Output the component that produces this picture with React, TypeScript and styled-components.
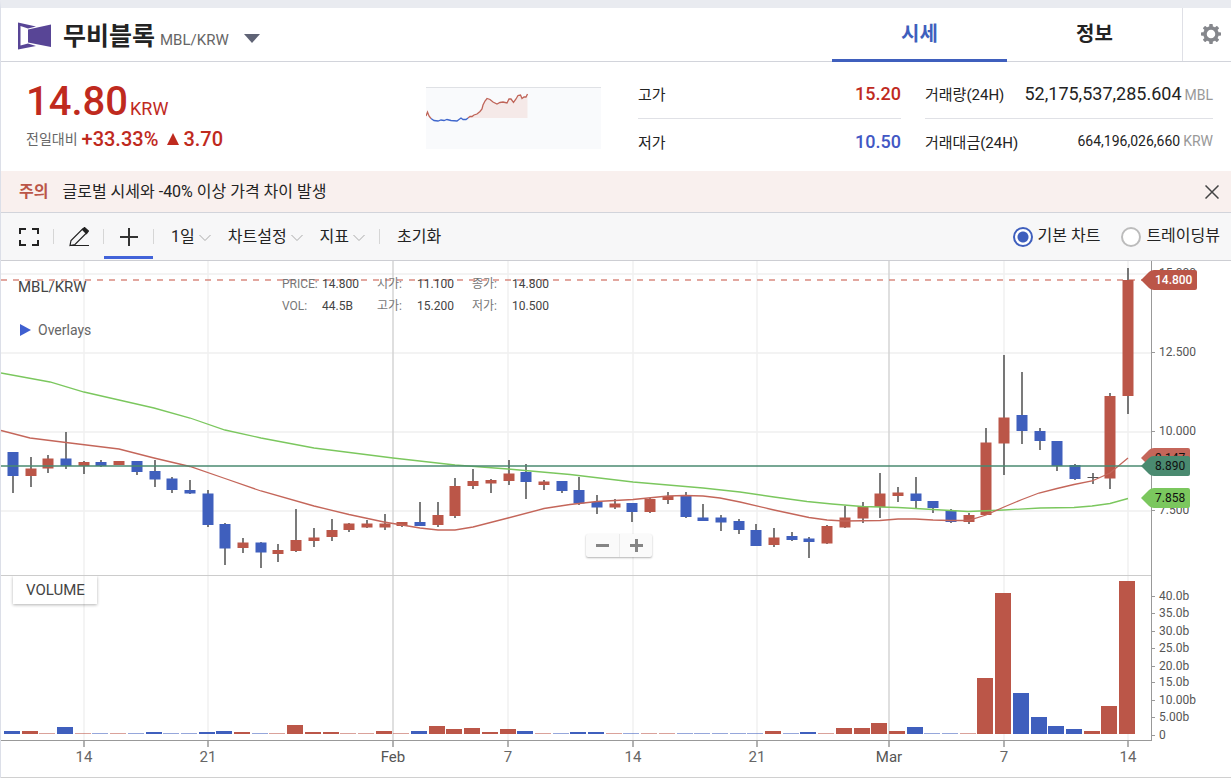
import React, { useLayoutEffect, useRef, useState } from 'react';
import styled, { createGlobalStyle, css } from 'styled-components';

const color = {
  red: '#bb5648',
  rise: '#bf2a1e',
  blue: '#3f5fbd',
  fall: '#4257c4',
  text: '#232323',
  line: '#d2d4db',
  green: '#4a8a70',
  lime: '#7bc75e',
};

const GlobalStyle = createGlobalStyle`
  * { box-sizing: border-box; }
  body {
    margin: 0;
    background: #fff;
    color: ${color.text};
    font-family: Roboto, "Noto Sans CJK KR", sans-serif;
    font-size: 15px;
  }
  button, input { font: inherit; color: inherit; }
  button { padding: 0; border: 0; background: none; cursor: pointer; }
  h1, p, dl, dd, dt { margin: 0; }
`;

const Page = styled.main`
  border-top: 8px solid #e9ebf0;
  border-left: 1px solid #dcdfe8;
`;

/* ---------- header ---------- */

const Header = styled.header`
  display: flex;
  height: 54px;
  border-bottom: 1px solid ${color.line};
`;

const CoinPicker = styled.button`
  display: flex;
  align-items: center;
  margin-right: auto;
  padding: 2px 0 0 16px;
`;

const CoinName = styled.h1`
  margin: 2px 0 0 12px;
  font-size: 25px;
  font-weight: 700;
  line-height: 32px;
`;

const CoinPair = styled.span`
  margin: 8px 15px 0 5px;
  font-size: 15px;
  line-height: 20px;
  color: #666;
`;

const DropArrow = styled.svg`
  width: 16px;
  height: 9px;
  margin-top: 6px;
`;

const Tabs = styled.nav`
  display: flex;
`;

const Tab = styled.a<{ $active?: boolean }>`
  width: 175px;
  height: 54px;
  font-size: 20px;
  font-weight: 700;
  line-height: 52px;
  text-align: center;
  text-decoration: none;
  color: ${(p) => (p.$active ? color.blue : color.text)};
  border-bottom: 3px solid ${(p) => (p.$active ? color.blue : 'transparent')};
`;

const SettingsButton = styled.button`
  display: flex;
  align-items: center;
  justify-content: center;
  width: 49px;
  padding: 0 0 2px 8px;
  border-left: 1px solid #dfe0e6;
`;

/* ---------- summary ---------- */

const Summary = styled.section`
  display: flex;
  height: 109px;
  padding: 0 18px 0 25px;
`;

const PriceBlock = styled.div`
  flex: 1;
  padding-top: 18px;
  color: ${color.rise};
  white-space: nowrap;
`;

const Price = styled.p`
  height: 47px;
  font-size: 18px;
  line-height: 44px;
`;

const PriceValue = styled.strong`
  margin-right: 2px;
  font-size: 40px;
  font-weight: 500;
`;

const Change = styled.p`
  display: flex;
  align-items: center;
  font-size: 20px;
  font-weight: 500;
  line-height: 24px;

  svg { margin: 0 4px 0 9px; }
`;

const ChangeLabel = styled.span`
  margin-right: 4px;
  font-size: 14px;
  font-weight: 400;
  line-height: 20px;
  color: #666;
`;

const Sparkline = styled.svg`
  width: 175px;
  height: 62px;
  margin-top: 25px;
  background: #f9fafc;
  border-top: 1px solid #dfe1e5;
`;

const Stats = styled.dl<{ $wide?: boolean }>`
  width: ${(p) => (p.$wide ? 288 : 263)}px;
  margin-left: ${(p) => (p.$wide ? 24 : 37)}px;
  padding-top: 9px;
`;

const StatRow = styled.div`
  display: flex;
  justify-content: space-between;
  align-items: center;
  height: 44px;
  white-space: nowrap;

  &:first-child {
    height: 48px;
    padding-bottom: 2px;
    border-bottom: 1px solid #e0e1e6;
  }
`;

const StatValue = styled.dd<{ $tone?: 'rise' | 'fall'; $small?: boolean }>`
  display: flex;
  align-items: baseline;
  gap: 3px;
  font-size: ${(p) => (p.$small ? 14 : 18)}px;
  font-weight: ${(p) => (p.$tone ? 500 : 400)};
  color: ${(p) => (p.$tone ? color[p.$tone] : color.text)};
`;

const Unit = styled.span`
  font-size: 14px;
  color: #999;
`;

/* ---------- notice ---------- */

const Notice = styled.section`
  display: flex;
  align-items: center;
  height: 42px;
  padding: 0 12px 0 18px;
  background: #f9f0ee;
  border-bottom: 1px solid ${color.line};
`;

const NoticeTitle = styled.strong`
  margin-right: 14px;
  font-size: 16px;
  line-height: 24px;
  color: ${color.red};
`;

const NoticeText = styled.p`
  flex: 1;
  font-size: 16px;
  line-height: 24px;
`;

const CloseButton = styled.button`
  display: flex;
`;

/* ---------- toolbar ---------- */

const Toolbar = styled.div`
  display: flex;
  align-items: center;
  height: 48px;
  padding: 0 11px 0 3px;
  background: #f7f7f8;
  border-bottom: 1px solid #cdced3;
  white-space: nowrap;
`;

const Divider = styled.span`
  width: 1px;
  height: 15px;
  background: #d6d6d6;
`;

const ToolButton = styled.button<{ $active?: boolean }>`
  display: flex;
  align-items: center;
  justify-content: center;
  width: 49px;
  height: 45px;
  border-top: 3px solid transparent;
  border-bottom: 3px solid ${(p) => (p.$active ? '#4263d9' : 'transparent')};
`;

const MenuButton = styled.button`
  display: flex;
  align-items: center;
  height: 45px;
  padding-bottom: 3px;
  margin-left: 17px;
  font-size: 16px;

  svg { margin: 6px 0 0 4px; }
  & + ${Divider} { margin-left: 14px; }
  ${Divider} + & { margin-left: 17px; }
`;

const ChartModes = styled.div`
  display: flex;
  gap: 21px;
  margin-left: auto;
`;

const ModeLabel = styled.label`
  display: flex;
  align-items: center;
  gap: 5px;
  font-size: 16px;
  line-height: 24px;
`;

const ModeText = styled.span`
  padding-bottom: 2px;
`;

const Radio = styled.input`
  appearance: none;
  width: 20px;
  height: 20px;
  margin: 0;
  border: 2px solid #bcbcbc;
  border-radius: 50%;
  background: #fff;

  &:checked {
    border-color: ${color.blue};
    background: radial-gradient(circle, ${color.blue} 5px, #fff 6px);
  }
`;

/* ---------- chart ---------- */

const ChartFrame = styled.section`
  position: relative;
  height: 517px;
  border-bottom: 1px solid #d0d0d0;
`;

const ChartSvg = styled.svg`
  display: block;
  width: 100%;
  height: 516px;
`;

const overlay = css`
  position: absolute;
  white-space: nowrap;
`;

const ChartTitle = styled.p`
  ${overlay}
  top: 16px;
  left: 17px;
  line-height: 20px;
  color: #444;
`;

const OverlaysButton = styled.button`
  ${overlay}
  top: 60px;
  left: 19px;
  display: flex;
  align-items: center;
  gap: 7px;
  font-size: 14px;
  line-height: 18px;
  color: #666;
`;

const Quote = styled.dl`
  ${overlay}
  top: 12px;
  left: 281px;
  display: grid;
  grid-template-columns: 40px 55px 40px 55px 40px 55px;
  font-size: 12px;
  line-height: 22px;
  color: #444;

  dt { color: #777; }
`;

const VolumeBadge = styled.p`
  ${overlay}
  top: 315px;
  left: 12px;
  padding: 4px 12px 4px 13px;
  line-height: 20px;
  color: #444;
  box-shadow: 0 1px 3px rgba(0, 0, 0, 0.3);
  clip-path: inset(0 -4px -4px -4px);
`;

const ZoomControls = styled.div`
  ${overlay}
  top: 273px;
  left: 50%;
  display: flex;
  margin-left: -30px;
  border-radius: 2px;
  background: #fafafa;
  box-shadow: 0 1px 2px rgba(0, 0, 0, 0.3);
`;

const ZoomButton = styled.button`
  display: flex;
  align-items: center;
  justify-content: center;
  width: 33px;
  height: 23px;

  & + & { border-left: 1px solid #eaeaea; }
`;

type Tone = 'r' | 'b' | 'n';
// [tone, high, body top, body bottom, low, volume height]
type Candle = [Tone, number, number, number, number, number];

const candles: Candle[] = [
  ['b', 452, 452, 476, 493, 3], ['r', 457, 468.5, 476, 487, 3], ['r', 455, 458.5, 468.5, 473, 1],
  ['b', 432, 458.5, 466, 469, 7], ['r', 461, 462, 466, 474, 1], ['b', 460, 462, 466, 467, 1],
  ['r', 461, 461, 465, 465, 1], ['b', 461, 461, 472, 475, 1], ['b', 460, 471, 479.5, 487, 2],
  ['b', 477, 478.5, 490, 493, 1], ['b', 480, 490, 493.5, 494, 1], ['b', 490, 493.5, 525, 527, 2],
  ['b', 523, 524, 548.5, 565, 3], ['r', 538, 542.5, 548, 553, 2], ['b', 542, 542.5, 552.5, 568, 1],
  ['r', 544, 550, 554, 562, 1], ['r', 509, 540, 551, 552, 9], ['r', 528, 537.5, 541, 547, 2],
  ['r', 519, 530, 537, 541, 2], ['r', 523, 523.5, 530, 532, 1], ['r', 520, 523.5, 527.5, 528, 1],
  ['r', 514, 523.5, 527.5, 530, 3], ['r', 522, 522, 526, 527, 1], ['b', 502, 522, 526, 526, 3],
  ['r', 502, 515, 525, 527, 8], ['r', 478, 486, 516, 518, 5], ['r', 469, 481, 486, 489, 6],
  ['r', 479, 480, 483.5, 493, 2], ['r', 460, 473.5, 481, 485, 5], ['b', 464, 472, 482, 499, 3],
  ['r', 480, 481.5, 485, 490, 1], ['b', 481, 481, 491, 493, 1], ['b', 477, 490, 503.5, 505, 2],
  ['b', 495, 502, 507.5, 514, 2], ['r', 499, 503.5, 507.5, 509, 1], ['b', 503, 503, 512, 522, 1],
  ['r', 498, 499, 512, 513, 1], ['r', 492, 496, 500, 504, 1], ['b', 492, 496, 517, 518, 1],
  ['b', 504, 517.5, 521, 521, 1], ['b', 515, 517.5, 522.5, 531, 1], ['b', 519, 521, 530, 534, 1],
  ['b', 524, 530, 546, 546, 1], ['r', 528, 537.5, 545, 547, 3], ['b', 532, 536, 540, 541, 1],
  ['b', 537, 538.5, 542, 558, 2], ['r', 525, 526, 543.5, 544, 1], ['r', 506, 517.5, 527.5, 528, 6],
  ['r', 502, 506.5, 518.5, 523, 6], ['r', 473, 493.5, 507, 518, 11], ['r', 487, 492.5, 496, 502, 3],
  ['b', 477, 493.5, 501, 508, 7], ['b', 501, 501, 508, 513, 1], ['b', 509, 510.5, 522, 523, 1],
  ['r', 513, 515, 522, 524, 1], ['r', 428, 442.5, 515, 515, 56], ['r', 355, 417.5, 443.5, 475, 141],
  ['b', 372, 415, 431, 444, 41], ['b', 428, 431, 441, 450, 17], ['b', 441, 441, 466, 471, 8],
  ['b', 464, 465, 479, 480, 5], ['n', 473, 477, 478, 484, 3], ['r', 393, 396, 478.5, 489, 28],
  ['r', 268, 280, 396, 414, 153],
];

const longAverage: [number, number][] = [
  [1, 373], [50, 382], [84, 392], [119, 400], [154, 408], [190, 418], [225, 430], [261, 438],
  [314, 448], [393, 458], [455, 465], [508, 469], [570, 474.5], [633, 482], [703, 488], [740, 492],
  [774, 497], [807, 501.5], [832, 504], [862, 506.5], [898, 507.5], [933, 509.5], [968, 511.5],
  [1004, 510], [1040, 508], [1074, 507.5], [1092, 506], [1110, 503.5], [1128, 498.5],
];

const shortAverage: [number, number][] = [
  [1, 430.5], [30, 438], [66, 442.5], [119, 449], [154, 458], [190, 466.5], [225, 478.5],
  [261, 491], [314, 506], [349, 514.5], [384, 522], [420, 528], [438, 530], [455, 530], [473, 527],
  [508, 518], [544, 508.5], [570, 504.5], [597, 501.5], [633, 499.5], [668, 496], [685, 495.5],
  [703, 496], [720, 498], [740, 502], [774, 510], [809, 517.5], [827, 520], [844, 521], [880, 520.5],
  [898, 519], [915, 519], [933, 520], [950, 520.5], [968, 520.5], [986, 515], [1004, 507],
  [1022, 499.5], [1039, 493], [1057, 488.5], [1074, 484.5], [1092, 481], [1110, 473], [1128, 458],
];

const dates: [number, string, boolean?][] = [
  [84, '14'], [208, '21'], [393, 'Feb', true], [508, '7'], [633, '14'], [757, '21'],
  [889, 'Mar', true], [1004, '7'], [1128, '14'],
];
const priceTicks: [number, string][] = [
  [273, '15.000'], [352, '12.500'], [431, '10.000'], [510, '7.500'],
];
const volumeTicks: [number, string][] = [
  [596, '40.0b'], [613, '35.0b'], [631, '30.0b'], [648, '25.0b'], [666, '20.0b'], [682, '15.0b'],
  [700, '10.00b'], [717, '5.00b'], [735, '0'],
];

const fillOf = (t: Tone) => (t === 'b' ? color.blue : t === 'r' ? color.red : '#555');

function PriceTag({ y, edge, width, fill, label, light }: {
  y: number; edge: number; width: number; fill: string; label: string; light?: boolean;
}) {
  const left = edge - 10;
  const right = edge + width;
  return (
    <g>
      <path
        d={`M${left} ${y} l8 -8 q2 -2 5 -2 H${right - 2} q2 0 2 2 v16 q0 2 -2 2 H${left + 13} q-3 0 -5 -2 z`}
        fill={fill}
      />
      <text x={edge + 4} y={y + 4} fontSize={12} fontWeight={light ? 500 : 400} fill={light ? '#fff' : '#111'}>
        {label}
      </text>
    </g>
  );
}

function Chart() {
  const frame = useRef<HTMLElement>(null);
  const [width, setWidth] = useState(1230);

  useLayoutEffect(() => {
    const el = frame.current;
    if (!el) return undefined;
    const update = () => setWidth(el.clientWidth);
    update();
    const observer = new ResizeObserver(update);
    observer.observe(el);
    return () => observer.disconnect();
  }, []);

  const axis = width - 79;
  const last = axis - 23;
  const scale = (last - 13) / 1115;
  const fx = (x: number) => 13 + (x - 13) * scale;
  const at = (i: number) => Math.round(13 + (i * (last - 13)) / (candles.length - 1));
  const line = (pts: [number, number][]) => pts.map(([x, y]) => `${fx(x).toFixed(1)},${y}`).join(' ');

  return (
    <ChartFrame ref={frame}>
      <ChartSvg role="img" aria-label="MBL/KRW">
        <g transform="translate(-1 -261)">
          {priceTicks.map(([y]) => (
            <path key={y} d={`M1 ${y + 1}H${axis}`} stroke="#efefef" strokeWidth={1.5} />
          ))}
          {dates.map(([x, , month]) => (
            <path
              key={x}
              d={`M${Math.round(fx(x))} 261V740`}
              stroke={month ? '#d4d4d4' : '#f0f0f0'}
              strokeWidth={1.5}
            />
          ))}
          <path d={`M1 280H${axis - 8}`} stroke="#d98a80" strokeWidth={1.5} strokeDasharray="6 6" />
          {candles.map(([tone, high, top, bottom, low, volume], i) => (
            <g key={i}>
              <path d={`M${at(i)} ${high}V${low}`} stroke="#333" strokeWidth={1.3} />
              <rect x={at(i) - 5.5} y={top} width={11} height={bottom - top} fill={fillOf(tone)} />
              <rect
                x={at(i) - 9}
                y={734 - volume}
                width={16}
                height={volume}
                fill={tone === 'b' ? color.blue : color.red}
                opacity={volume === 1 ? 0.55 : 1}
              />
            </g>
          ))}
          <polyline points={line(longAverage)} fill="none" stroke={color.lime} strokeWidth={1.3} />
          <polyline points={line(shortAverage)} fill="none" stroke="#c4665a" strokeWidth={1.3} />
          <path d={`M1 466H${axis}`} stroke={color.green} strokeWidth={1.5} />

          <path d={`M1 575.5H${axis}`} stroke="#ccc" />
          <path d={`M1 740.5H${axis + 1}`} stroke="#999" />
          <path d={`M${axis + 0.5} 261V741`} stroke="#999" />
          {dates.map(([x, label, month]) => (
            <g key={x}>
              <path d={`M${Math.round(fx(x))} 741v6`} stroke="#999" strokeWidth={1.5} />
              <text x={fx(x)} y={762} fontSize={15} textAnchor="middle" fill={month ? '#555' : '#666'}>
                {label}
              </text>
            </g>
          ))}
          {[...priceTicks, ...volumeTicks].map(([y, label]) => (
            <g key={label}>
              <path d={`M${axis} ${y + 0.5}h4`} stroke="#999" />
              <text x={axis + 8} y={y + 4} fontSize={12} fill="#555">
                {label}
              </text>
            </g>
          ))}
          <PriceTag y={280} edge={axis} width={46} fill={color.red} label="14.800" light />
          <PriceTag y={458} edge={axis} width={39} fill="#c4665a" label="9.147" />
          <PriceTag y={466} edge={axis} width={39} fill={color.green} label="8.890" />
          <PriceTag y={498} edge={axis} width={39} fill={color.lime} label="7.858" />
        </g>
      </ChartSvg>

      <ChartTitle>MBL/KRW</ChartTitle>
      <OverlaysButton>
        <svg width="11" height="12" aria-hidden="true">
          <path d="M0 0l11 6L0 12z" fill="#3f5fd0" />
        </svg>
        Overlays
      </OverlaysButton>
      <Quote>
        <dt>PRICE:</dt><dd>14.800</dd>
        <dt>시가:</dt><dd>11.100</dd>
        <dt>종가:</dt><dd>14.800</dd>
        <dt>VOL:</dt><dd>44.5B</dd>
        <dt>고가:</dt><dd>15.200</dd>
        <dt>저가:</dt><dd>10.500</dd>
      </Quote>
      <VolumeBadge>VOLUME</VolumeBadge>
      <ZoomControls>
        <ZoomButton aria-label="축소">
          <svg width="13" height="13"><path d="M0 6.5h13" stroke="#858585" strokeWidth="3" /></svg>
        </ZoomButton>
        <ZoomButton aria-label="확대">
          <svg width="13" height="13"><path d="M0 6.5h13M6.5 0v13" stroke="#858585" strokeWidth="3" /></svg>
        </ZoomButton>
      </ZoomControls>
    </ChartFrame>
  );
}

const Chevron = () => (
  <svg width="12" height="8" fill="none" stroke="#aaa" aria-hidden="true">
    <path d="M0.5 1l5.5 5.5L11.5 1" />
  </svg>
);

const gearTeeth = [0, 45, 90, 135, 180, 225, 270, 315];

export default function App() {
  const [mode, setMode] = useState('basic');

  return (
    <>
      <GlobalStyle />
      <Page>
        <Header>
          <CoinPicker>
            <svg width="34" height="28" viewBox="0 0 34 28" aria-hidden="true">
              <path d="M1 0.500L19 4.500 11 6.500 3.500 4V23.500L11 21.500 19 24 1 27.500Z" fill="#584596" />
              <path d="M11 7.500L34 2.500V25L11 20.500Z" fill="#584596" />
            </svg>
            <CoinName>무비블록</CoinName>
            <CoinPair>MBL/KRW</CoinPair>
            <DropArrow aria-hidden="true">
              <path d="M0 0h16l-8 9z" fill="#5f6375" />
            </DropArrow>
          </CoinPicker>
          <Tabs>
            <Tab href="#trade" $active>시세</Tab>
            <Tab href="#info">정보</Tab>
          </Tabs>
          <SettingsButton aria-label="설정">
            <svg width="20" height="20" viewBox="-10 -10 20 20">
              <circle r="6" fill="none" stroke="#85878c" strokeWidth="3.500" />
              {gearTeeth.map((a) => (
                <rect key={a} x="-1.800" y="-10" width="3.600" height="3.500" rx="0.800" fill="#85878c" transform={`rotate(${a})`} />
              ))}
            </svg>
          </SettingsButton>
        </Header>

        <Summary>
          <PriceBlock>
            <Price><PriceValue>14.80</PriceValue>KRW</Price>
            <Change>
              <ChangeLabel>전일대비</ChangeLabel>
              +33.33%
              <svg width="12" height="12" aria-hidden="true"><path d="M6 0l6 12H0z" fill="#bf2a1e" /></svg>
              3.70
            </Change>
          </PriceBlock>
          <Sparkline viewBox="0 0 175 61" aria-hidden="true">
            <path
              d="M42 30L48 27 53 24 56 21 58 15 61 11 65 12 68 15 71 16 76 15 81 15 83 11 86 13 88 14 92 9 94 7 96 11 99 9 101.500 6V30Z"
              fill="#f5e9e8"
            />
            <path d="M0 28L1.500 24 3 28 5 30.500" fill="none" stroke="#bf6458" strokeWidth="1.300" />
            <path
              d="M5 30.500L8 32.500 12 33 15 32 18 32.500 21 31.500 25 32.500 31 33 33 31.500 35 30 37 31.500 40 31.500 42 30"
              fill="none" stroke="#3f66cc" strokeWidth="1.300"
            />
            <path
              d="M42 30L44 28.500 46 28.500 48 27 51 26 54 23.500 56 21 57 17 59 13 61 10.500 64 11.500 67 14 71 16 74 14.500 77 14 81 15 83 11 85 11 87.500 14.500 90 11 92 7.500 94.500 7 96 10.500 98 9 100 9 101.500 6"
              fill="none" stroke="#bf6458" strokeWidth="1.300"
            />
          </Sparkline>
          <Stats>
            <StatRow><dt>고가</dt><StatValue $tone="rise">15.20</StatValue></StatRow>
            <StatRow><dt>저가</dt><StatValue $tone="fall">10.50</StatValue></StatRow>
          </Stats>
          <Stats $wide>
            <StatRow><dt>거래량(24H)</dt><StatValue>52,175,537,285.604 <Unit>MBL</Unit></StatValue></StatRow>
            <StatRow><dt>거래대금(24H)</dt><StatValue $small>664,196,026,660 <Unit>KRW</Unit></StatValue></StatRow>
          </Stats>
        </Summary>

        <Notice>
          <NoticeTitle>주의</NoticeTitle>
          <NoticeText>글로벌 시세와 -40% 이상 가격 차이 발생</NoticeText>
          <CloseButton aria-label="닫기">
            <svg width="14" height="14" stroke="#444" strokeWidth="1.500"><path d="M0.500 0.500l13 13M13.500 0.500l-13 13" /></svg>
          </CloseButton>
        </Notice>

        <Toolbar>
          <ToolButton aria-label="전체화면">
            <svg width="20" height="18" fill="none" stroke="#222" strokeWidth="2">
              <path d="M7 1H1v5M13 1h6v5M1 12v5h6M19 12v5h-6" />
            </svg>
          </ToolButton>
          <Divider />
          <ToolButton aria-label="그리기">
            <svg width="20" height="20" fill="none" stroke="#222" strokeWidth="1.200">
              <path d="M1 18.500l1-5L13.500 2l4 4L6 17.500zM1 18.500H20" />
              <path d="M13.500 2.500l2-2 4 3.500-2 2.500z" fill="#222" />
            </svg>
          </ToolButton>
          <Divider />
          <ToolButton aria-label="십자선" $active>
            <svg width="18" height="18" stroke="#333" strokeWidth="2"><path d="M0 9h18M9 0v18" /></svg>
          </ToolButton>
          <Divider />
          <MenuButton>1일<Chevron /></MenuButton>
          <MenuButton>차트설정<Chevron /></MenuButton>
          <MenuButton>지표<Chevron /></MenuButton>
          <Divider />
          <MenuButton>초기화</MenuButton>
          <ChartModes>
            <ModeLabel>
              <Radio type="radio" name="mode" checked={mode === 'basic'} onChange={() => setMode('basic')} />
              <ModeText>기본 차트</ModeText>
            </ModeLabel>
            <ModeLabel>
              <Radio type="radio" name="mode" checked={mode === 'tv'} onChange={() => setMode('tv')} />
              <ModeText>트레이딩뷰</ModeText>
            </ModeLabel>
          </ChartModes>
        </Toolbar>

        <Chart />
      </Page>
    </>
  );
}
